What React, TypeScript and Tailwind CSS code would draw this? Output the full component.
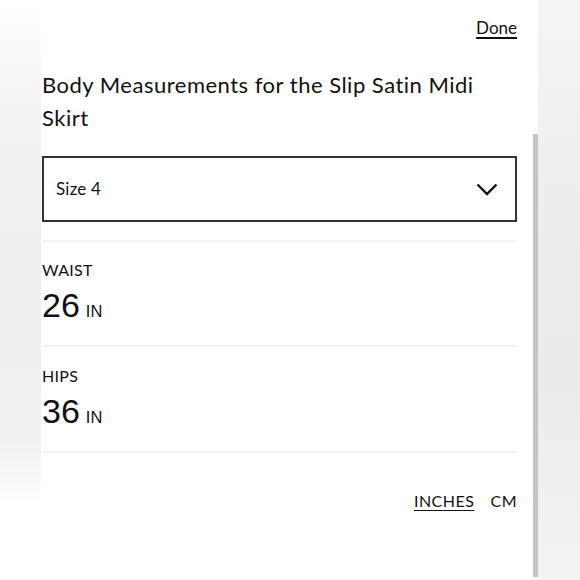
import React from "react";

export default function App() {
  const geo = { fontFamily: "Lato, 'Noto Sans', sans-serif" };
  const num = { fontFamily: "'Liberation Sans', Arial, sans-serif" };
  return (
    <div className="w-[580px] h-[580px] flex bg-white overflow-hidden text-[#111]" style={geo}>
      <div className="w-[41px] h-full bg-[linear-gradient(to_bottom,#ffffff_0px,#f2f2f2_120px,#eeeeee_300px,#f1f1f1_440px,#ffffff_510px)]" />
      <div className="w-[497px] h-full bg-white flex">
        <div className="w-[476px] flex flex-col pl-px">
          <div className="flex justify-end pt-[17px] h-[42px]">
            <span className="text-[17px] leading-[22px] underline underline-offset-[3px] decoration-[1.5px]">Done</span>
          </div>
          <h1 className="mt-[26px] max-w-[450px] text-[22px] leading-[33px] font-normal tracking-[0.5px]">
            Body Measurements for the Slip Satin Midi Skirt
          </h1>
          <div className="mt-[22px] h-[66px] border-2 border-[#333] flex items-center justify-between pl-[12px] pr-[17px]">
            <span className="text-[17px] tracking-[0.2px]">Size 4</span>
            <svg width="22" height="13" viewBox="0 0 22 13" fill="none">
              <path d="M1.5 1.5 L11 11 L20.5 1.5" stroke="#111" strokeWidth="2.4" />
            </svg>
          </div>
          <div className="mt-[18px] h-[2px] bg-[#f3f3f3]" />
          <div className="pt-[18px] pb-[21px]">
            <div className="text-[16px] leading-[20px] tracking-[0.3px]">WAIST</div>
            <div className="flex items-baseline mt-[6px]" style={num}>
              <span className="text-[34px] leading-[38px]">26</span>
              <span className="text-[16.5px] ml-[6px]">IN</span>
            </div>
          </div>
          <div className="h-[2px] bg-[#f3f3f3]" />
          <div className="pt-[19px] pb-[21px]">
            <div className="text-[16px] leading-[20px] tracking-[0.3px]">HIPS</div>
            <div className="flex items-baseline mt-[6px]" style={num}>
              <span className="text-[34px] leading-[38px]">36</span>
              <span className="text-[16.5px] ml-[6px]">IN</span>
            </div>
          </div>
          <div className="h-[2px] bg-[#f3f3f3]" />
          <div className="flex justify-end gap-[16px] mt-[38px] text-[16px] leading-[20px] tracking-[0.5px]">
            <span className="underline underline-offset-[3px]">INCHES</span>
            <span>CM</span>
          </div>
        </div>
        <div className="w-[16px]" />
        <div className="w-[5px] h-full flex flex-col">
          <div className="h-[134px]" />
          <div className="h-[443px] bg-[#c4c4c4]" />
        </div>
      </div>
      <div className="flex-1 h-full bg-[linear-gradient(to_bottom,#f5f5f5_0px,#ededed_200px,#ebebeb_380px,#f3f3f3_580px)]" />
    </div>
  );
}
